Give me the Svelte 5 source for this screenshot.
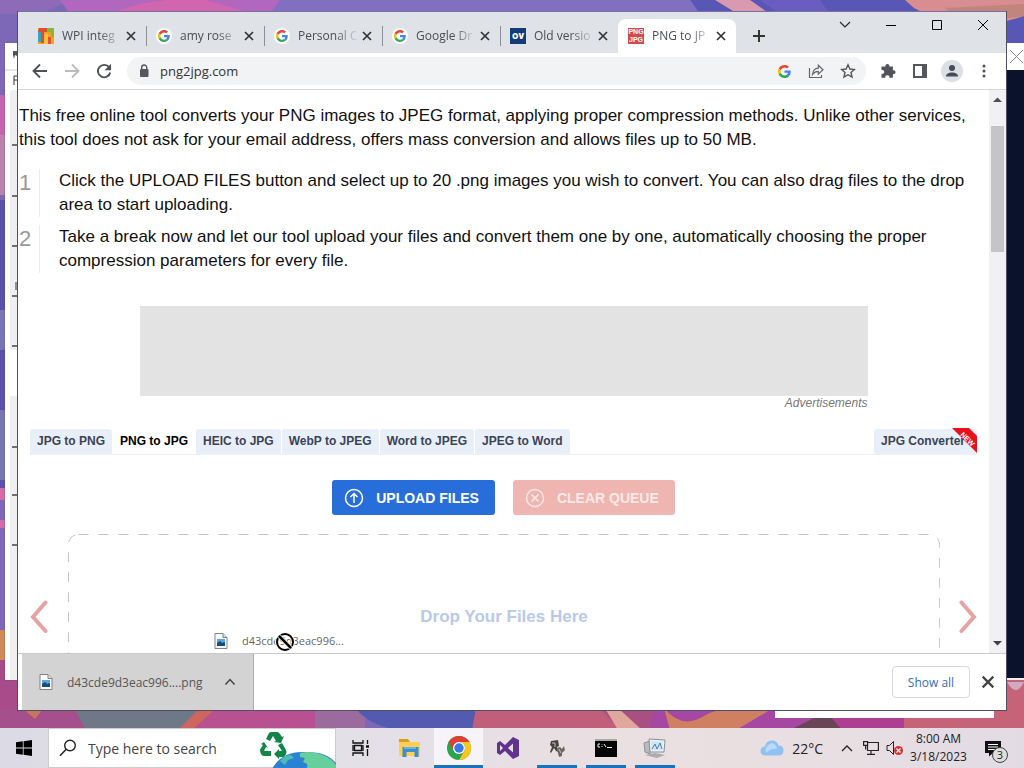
<script>
  const tabs = [
    { title: 'WPI integ', icon: 'wpi' },
    { title: 'amy rose', icon: 'google' },
    { title: 'Personal C', icon: 'google' },
    { title: 'Google Dr', icon: 'google' },
    { title: 'Old versio', icon: 'ov' },
    { title: 'PNG to JP', icon: 'png', active: true }
  ];
  const formats = ['JPG to PNG', 'PNG to JPG', 'HEIC to JPG', 'WebP to JPEG', 'Word to JPEG', 'JPEG to Word'];
  const ticks = [144, 195, 245, 295, 345, 446, 494, 544];
</script>

{#snippet google(size)}
  <svg width={size} height={size} viewBox="0 0 48 48" aria-hidden="true">
    <path fill="#ea4335" d="M24 9.5c3.5 0 6.700 1.200 9.200 3.600l6.900-6.900C35.900 2.400 30.500 0 24 0 14.600 0 6.500 5.400 2.600 13.200l8 6.200C12.400 13.700 17.700 9.500 24 9.500z" />
    <path fill="#4285f4" d="M47 24.600c0-1.600-.2-3.100-.4-4.600H24v9h12.900c-.6 3-2.200 5.500-4.800 7.200l7.700 6C44.400 38 47 31.800 47 24.600z" />
    <path fill="#fbbc05" d="M10.500 28.600a14.500 14.500 0 0 1 0-9.200l-8-6.200a24 24 0 0 0 0 21.600z" />
    <path fill="#34a853" d="M24 48c6.500 0 11.900-2.100 15.900-5.800l-7.700-6c-2.200 1.500-4.900 2.300-8.200 2.300-6.300 0-11.600-4.200-13.500-9.900l-8 6.200C6.500 42.600 14.600 48 24 48z" />
  </svg>
{/snippet}

{#snippet cross(size)}
  <svg width={size} height={size} viewBox="0 0 12 12" aria-hidden="true"><path d="M2 2l8 8M10 2l-8 8" fill="none" stroke="currentColor" stroke-width="1.7" /></svg>
{/snippet}

{#snippet file()}
  <svg width="14" height="18" viewBox="0 0 14 18" aria-hidden="true">
    <path d="M1 1.500h8l4 4v11H1z" fill="#fafafa" stroke="#7e8489" />
    <path d="M9 1.500v4h4" fill="#ddd" stroke="#7e8489" />
    <rect x="3" y="7" width="8" height="7" fill="#5aa5dc" />
    <path d="M3 14v-3l3-2 2 2 2-1 1 1v3z" fill="#174b7d" />
  </svg>
{/snippet}

<div class="desktop">
  <svg class="wallpaper" viewBox="0 0 1024 768" preserveAspectRatio="none" aria-hidden="true">
    <rect width="1024" height="768" fill="#7d68b8" />
    <path d="M0 0h70l-30 14H0z" fill="#8d6bb9" />
    <path d="M60 0h230l-12 14H70z" fill="#b067bd" />
    <path d="M110 14Q150-4 205 0l50 14z" fill="#d265b0" />
    <path d="M280 0h420l20 14H270z" fill="#8170c0" />
    <path d="M690 0h334v130H990L930 14H700z" fill="#5857b5" />
    <path d="M715 0h35l20 14h-32z" fill="#d99ab0" />
    <path d="M760 0h60l10 14h-50z" fill="#6a5cc0" />
    <path d="M905 0h119v16q-60 20-110-8z" fill="#d88d91" />
    <path d="M945 8l79-4v12l-60 8z" fill="#c2857d" />
    <path d="M0 95h6v40H0z" fill="#c764ae" /><path d="M0 135h6v60H0z" fill="#b983ac" />
    <path d="M0 200h6v290H0z" fill="#5b51aa" /><path d="M0 310h6v40H0zM0 410h6v70H0z" fill="#7776b4" />
    <path d="M0 488h6v12H0zM0 520h6v8H0z" fill="#d46aa6" />
    <path d="M0 630h6v30H0z" fill="#d18a56" />
    <path d="M0 660h20v70H0z" fill="#a94b8b" />
    <path d="M0 708h100v22H0z" fill="#a54f8d" /><path d="M22 708l22 0-9 11z" fill="#c8755d" />
    <path d="M74 708h140l-24 22H86z" fill="#6e7886" />
    <path d="M180 730q18-24 55-22h95v22z" fill="#b95091" />
    <path d="M178 730l20-20 16 0-22 20z" fill="#cf665e" />
    <path d="M315 708h50v22h-50z" fill="#9c6b9e" />
    <path d="M355 708h125v22h-82q-28-4-43-22z" fill="#525bb0" />
    <path d="M476 708h160v22H472z" fill="#c05e7b" />
    <path d="M600 708h60v22h-40z" fill="#a95080" />
    <path d="M618 730l-12-20 12-2 24 22z" fill="#e0a79c" />
    <path d="M655 708h370v22H648z" fill="#a747a4" />
    <path d="M664 708q18 22 40 8 15-9 38-8 24 1 38-4l-44 26h-66z" fill="#d08060" />
    <path d="M790 730l28-14h78v14z" fill="#694456" />
    <path d="M830 716h194v14H842z" fill="#ad3e91" />
    <path d="M904 716l104-36 16 0v50H904z" fill="#c66379" />
    <path d="M1007 682q9 16 17 0z" fill="#d4a9c0" />
  </svg>

  <div class="workspace">
    <section class="back-window" aria-hidden="true">
      <svg width="12" height="637" viewBox="0 0 12 637">
        <rect x="5" y="47" width="7" height="260" fill="#eeeef1" />
        <rect x="5" y="353" width="7" height="284" fill="#efeff0" />
        <path d="M0 27h12" stroke="#cfcfd6" /><path d="M8 8h4v5l-2-1-1 4-1-4z" fill="#555" />
        {#each ticks as y}<path d="M7 {y - 42}h5" stroke="#444" stroke-width="1.500" />{/each}
        <path d="M9 42v-9h3M9 37h3M11 247v-8" stroke="#333" fill="none" />
      </svg>
    </section>
    <section class="side-window" aria-hidden="true">
      <div class="side-title">
        <svg width="15" height="15" viewBox="0 0 15 15"><path d="M1 1l13 13M14 1L1 14" stroke="#888" fill="none" /></svg>
      </div>
    </section>
    <div class="lower-window"></div>

    <main class="browser">
      <header class="tabstrip">
        {#each tabs as tab}
          <div class="tab" class:active={tab.active}>
            <span class="favicon">
              {#if tab.icon === 'google'}
                <span class="disc">{@render google(12)}</span>
              {:else if tab.icon === 'wpi'}
                <svg width="16" height="16" viewBox="0 0 16 16" aria-hidden="true">
                  <path d="M0 0h16v16H0z" fill="#f0a12c" /><path d="M0 2h5v12H0z" fill="#35a4c6" /><path d="M1 0h8v4H6v11H3V4H0z" fill="#dd4f31" /><path d="M9 0h7v9h-3V4H9z" fill="#84b83a" /><path d="M7 6h3v10H6z" fill="#f4c637" /><path d="M10 9h3v7h-3z" fill="#dd572e" />
                </svg>
              {:else if tab.icon === 'ov'}
                <span class="ov">OV</span>
              {:else}
                <span class="png"><span>PNG</span><span>JPG</span></span>
              {/if}
            </span>
            <span class="tab-title">{tab.title}</span>
            <button class="tab-close" aria-label="Close tab">{@render cross(12)}</button>
          </div>
        {/each}
        <button class="new-tab" aria-label="New tab"><svg width="14" height="14" viewBox="0 0 14 14"><path d="M7 1v12M1 7h12" stroke="#333" stroke-width="2" /></svg></button>
        <div class="controls">
          <button aria-label="Search tabs"><svg width="12" height="12" viewBox="0 0 12 12"><path d="M1 3l5 5 5-5" fill="none" stroke="#222" stroke-width="1.100" /></svg></button>
          <button aria-label="Minimize"><svg width="12" height="12" viewBox="0 0 12 12"><path d="M1 6.500h10" stroke="#000" /></svg></button>
          <button aria-label="Maximize"><svg width="12" height="12" viewBox="0 0 12 12"><path d="M1.500 1.500h9v9h-9z" fill="none" stroke="#000" /></svg></button>
          <button aria-label="Close"><svg width="12" height="12" viewBox="0 0 12 12"><path d="M1 1l10 10M11 1L1 11" stroke="#000" /></svg></button>
        </div>
      </header>

      <nav class="toolbar">
        <button aria-label="Back"><svg width="16" height="16" viewBox="0 0 16 16"><path d="M15 8H2M8 1.500L1.500 8 8 14.500" fill="none" stroke="#4d5054" stroke-width="1.800" /></svg></button>
        <button aria-label="Forward"><svg width="16" height="16" viewBox="0 0 16 16"><path d="M1 8h13M8 1.500L14.500 8 8 14.500" fill="none" stroke="#babcbe" stroke-width="1.800" /></svg></button>
        <button aria-label="Reload"><svg width="16" height="16" viewBox="0 0 16 16"><path d="M13.200 4.500A6.200 6.200 0 1 0 14.200 9.500" fill="none" stroke="#4d5054" stroke-width="1.900" /><path d="M15 .8v6.400H8.600z" fill="#4d5054" /></svg></button>
        <div class="omnibox">
          <svg width="16" height="16" viewBox="0 0 16 16" aria-hidden="true"><rect x="4" y="6" width="8.500" height="8" rx="1" fill="#54575b" /><path d="M5.700 7V4.500a2.500 2.500 0 0 1 5 0V7" fill="none" stroke="#54575b" stroke-width="1.400" /></svg>
          <input aria-label="Address" value="png2jpg.com" />
          <button aria-label="Search with Google">{@render google(13)}</button>
          <button aria-label="Share"><svg width="16" height="16" viewBox="0 0 16 16" fill="none" stroke="#63666a" stroke-width="1.200"><path d="M1.500 5v9.500h12V12" /><path d="M4.500 11.500C4.800 7.500 7 5.400 10.300 5.200V2.200L15 6.700l-4.700 4.500V8.300C7.800 8.300 6 9.300 4.500 11.500z" /></svg></button>
          <button aria-label="Bookmark"><svg width="16" height="16" viewBox="0 0 16 16"><path d="M8 1.800l1.900 4.200 4.500.5-3.400 3 1 4.500L8 11.700 4 14l1-4.500-3.400-3L6.100 6z" fill="none" stroke="#54575b" stroke-width="1.400" /></svg></button>
        </div>
        <button aria-label="Extensions"><svg width="16" height="16" viewBox="0 0 16 16"><path d="M1.500 3.500h4a2 2 0 1 1 3.800 0h3.600v3.800a2 2 0 1 1 0 3.800v3.600H9.300a2 2 0 1 0-3.900 0H1.500v-3.900a2 2 0 1 0 0-3.700z" fill="#515458" /></svg></button>
        <button aria-label="Side panel"><svg width="16" height="16" viewBox="0 0 16 16"><path d="M2 2h12v12H2z" fill="none" stroke="#54575b" stroke-width="2" /><path d="M10 2h4v12h-4z" fill="#54575b" /></svg></button>
        <button aria-label="Profile"><span class="avatar"><svg width="14" height="14" viewBox="0 0 14 14"><circle cx="7" cy="4" r="3" fill="#464c57" /><path d="M1 12.500c0-3 3-4 6-4s6 1 6 4z" fill="#464c57" /></svg></span></button>
        <button aria-label="Menu"><svg width="4" height="14" viewBox="0 0 4 14" fill="#4d5054"><circle cx="2" cy="2" r="1.500" /><circle cx="2" cy="7" r="1.500" /><circle cx="2" cy="12" r="1.500" /></svg></button>
      </nav>

      <div class="viewport">
        <article class="page">
          <p>This free online tool converts your PNG images to JPEG format, applying proper compression methods. Unlike other services,<br />this tool does not ask for your email address, offers mass conversion and allows files up to 50 MB.</p>
          <ol>
            <li><span class="num">1</span><span class="step">Click the UPLOAD FILES button and select up to 20 .png images you wish to convert. You can also drag files to the drop<br />area to start uploading.</span></li>
            <li><span class="num">2</span><span class="step">Take a break now and let our tool upload your files and convert them one by one, automatically choosing the proper<br />compression parameters for every file.</span></li>
          </ol>
          <div class="ad"><div class="ad-box"></div><small>Advertisements</small></div>
          <nav class="formats">
            {#each formats as format, i}
              <a href="#top" class:current={i === 1}>{format}</a>
            {/each}
            <a href="#top" class="converter">JPG Converter
              <svg class="ribbon" width="26" height="26" viewBox="0 0 26 26" aria-hidden="true"><path d="M1 0h17l8 8v17z" fill="#e8101a" /><text x="0" y="0" transform="translate(9 7) rotate(45)">NEW</text></svg>
            </a>
          </nav>
          <div class="actions">
            <button class="upload"><svg width="20" height="20" viewBox="0 0 20 20"><circle cx="10" cy="10" r="8.500" /><path d="M10 15V5.500M6.500 9L10 5.500 13.500 9" /></svg>UPLOAD FILES</button>
            <button class="clear"><svg width="20" height="20" viewBox="0 0 20 20"><circle cx="10" cy="10" r="8.500" /><path d="M6.500 6.500l7 7M13.500 6.500l-7 7" /></svg>CLEAR QUEUE</button>
          </div>
          <div class="queue">
            <button aria-label="Previous"><svg width="18" height="34" viewBox="0 0 18 34"><path d="M15.500 2.500L3 17l12.500 14" /></svg></button>
            <div class="dropzone">
              <svg class="dashes" width="100%" height="100%" aria-hidden="true"><rect x="0.500" y="0.500" width="99.900%" height="99%" rx="10" /></svg>
              Drop Your Files Here
            </div>
            <button aria-label="Next"><svg width="18" height="34" viewBox="0 0 18 34"><path d="M2.500 2.500L15 17 2.500 31" /></svg></button>
          </div>
        </article>
        <div class="scrollbar" aria-hidden="true">
          <svg width="9" height="5" viewBox="0 0 9 5"><path d="M0 5l4.500-4.500L9 5z" fill="#505050" /></svg>
          <div class="track"><div class="thumb"></div></div>
          <svg width="9" height="5" viewBox="0 0 9 5"><path d="M0 0l4.500 4.500L9 0z" fill="#404040" /></svg>
        </div>
        <div class="ghost">
          {@render file()}<span>d43cde9d3eac996...</span>
          <svg class="cursor" width="20" height="20" viewBox="0 0 20 20" aria-hidden="true"><circle cx="10" cy="10" r="8" fill="none" stroke="#fff" stroke-width="4" /><circle cx="10" cy="10" r="8" fill="none" stroke="#000" stroke-width="2" /><path d="M4 4l12 12" stroke="#fff" stroke-width="4" /><path d="M4 4l12 12" stroke="#000" stroke-width="2.500" /></svg>
        </div>
      </div>

      <footer class="downloads">
        <button class="download">{@render file()}<span>d43cde9d3eac996....png</span><svg width="12" height="12" viewBox="0 0 12 12"><path d="M1.500 8.500L6 3.500l4.500 5" fill="none" stroke="#444" stroke-width="1.500" /></svg></button>
        <button class="show-all">Show all</button>
        <button class="dismiss" aria-label="Close downloads">{@render cross(16)}</button>
      </footer>
    </main>
  </div>

  <footer class="taskbar">
    <button class="start" aria-label="Start"><svg width="16" height="16" viewBox="0 0 16 16"><path d="M0 2.300l6.800-1v6.300H0zM7.600 1.200L16 0v7.600H7.600zM0 8.400h6.800v6.300l-6.800-1zM7.600 8.400H16V16l-8.400-1.200z" /></svg></button>
    <label class="search">
      <svg width="18" height="18" viewBox="0 0 18 18" aria-hidden="true"><circle cx="11" cy="6.500" r="5.300" fill="none" stroke="#222" stroke-width="1.400" /><path d="M7.200 10.300L1 16.800" stroke="#222" stroke-width="1.500" /></svg>
      <input aria-label="Search" placeholder="Type here to search" />
      <svg class="earth" width="78" height="40" viewBox="0 0 78 40" aria-hidden="true">
        <g fill="#118447" transform="translate(-2 -1)">
          <path d="M10 11l3-6q1-1 3-1h5q2 0 3 2l2 3 2-1-3 7-7-1 2-1-3-5-3 5z" />
          <path d="M26 15l4 7q1 2 0 4l-2 3h-5v2l-5-5 5-5v2h3l-4-6z" />
          <path d="M8 14l4 6-2-1-2 4h7v5H8q-2 0-3-2l-1-3q0-2 1-3l2-3-2-1z" />
        </g>
        <path d="M14 40q10-18 32-17 22-1 32 11v6z" fill="#2c82d2" />
        <path d="M42 24q12-3 25 3 8 4 11 9v4H48q4-5-3-7l2-4-5-1z" fill="#66cf9b" />
        <path d="M22 32q5-7 11-6l3 3-6 2-3 5z" fill="#4fb9b4" />
      </svg>
    </label>
    <button class="app" aria-label="Task view"><svg width="18" height="16" viewBox="0 0 18 16" fill="none" stroke="#111" stroke-width="1.300"><path d="M1 0v3h10V0M2.500 5.500h7v5h-7zM1 16v-3h10v3M1 5v6M11 5v6M15.500 0v4M15.500 9v7" /><path d="M14 6.500h3" stroke-width="2.500" /></svg></button>
    <button class="app" aria-label="File Explorer"><svg width="22" height="20" viewBox="0 0 22 20"><path d="M0 1h9l2 3h-11z" fill="#d99b20" /><path d="M0 4h21v14H0z" fill="#ffcf55" /><path d="M3.500 9h16v10h-4v-5h-8v5h-4z" fill="#3a8fcf" /><path d="M5 9h12v2H5z" fill="#65b4e4" /></svg></button>
    <button class="app focused" aria-label="Chrome"><svg width="24" height="24" viewBox="0 0 24 24"><circle cx="12" cy="12" r="12" fill="#2da44e" /><path d="M1.600 6A12 12 0 0 1 22.400 6H12a6 6 0 0 0-5.200 9z" fill="#df3f32" /><path d="M22.400 6A12 12 0 0 1 12 24l5.200-9A6 6 0 0 0 12 6z" fill="#fbc51c" /><circle cx="12" cy="12" r="6" fill="#fff" /><circle cx="12" cy="12" r="4.700" fill="#3b78e7" /></svg></button>
    <button class="app" aria-label="Visual Studio"><svg width="22" height="22" viewBox="0 0 22 22"><path fill-rule="evenodd" d="M16 0l6 3v16l-6 3-8-8-5 4-3-2V6l3-2 5 4zM16 6.500L11 11l5 4.500zM3 8v6l3-3z" fill="#62338c" /></svg></button>
    <button class="app open" aria-label="Process tool"><svg width="16" height="18" viewBox="0 0 16 18"><path d="M2 2l7-1 1 6-2 1 1 5-2-1-2-3-3 5-1-1 2-5-2-2z" fill="#45423f" /><path d="M8 9l3-1 2 2 2-3 1 4-3 3v3l-3 1-1-4z" fill="#6a6763" /><path d="M6 4v4M3 4h3M10 10l2 4" stroke="#c5c2bf" fill="none" /></svg></button>
    <button class="app open" aria-label="Command prompt"><svg width="22" height="18" viewBox="0 0 22 18"><path d="M0 0h22v18H0z" fill="#050505" /><path d="M0 1h22" stroke="#aaa" stroke-width="2" /><path d="M5 5H3v3h2M7 5v.5M7 7v1M9 5l2 3M12 8.500h5" stroke="#eee" fill="none" /></svg></button>
    <button class="app open" aria-label="Resource monitor"><svg width="24" height="20" viewBox="0 0 24 20"><path d="M1 5l6-2v13l-5-2z" fill="#b7bbc0" stroke="#8d9196" /><path d="M6 1l16 1-1 12H7z" fill="#eef3f7" stroke="#8a9095" /><path d="M8 3l12 .7-.7 8.500H8.500z" fill="#cfe5f2" /><path d="M9 11l3-5 2 5 3-6 2 6" fill="none" stroke="#4587a8" /><path d="M2 17l10-2 10 2-8 3z" fill="#a9adb0" /></svg></button>
    <div class="tray">
      <button class="weather"><svg width="24" height="16" viewBox="0 0 24 16"><path d="M5 15.500a4.500 4.500 0 0 1 0-9q1-6 7-6 5 0 6.500 5 5 0 5 5t-5 5z" fill="#8fc1f3" /><path d="M6 13q-2-6 5-10 5 0 6 6-6-1-11 4z" fill="#b9dafa" /></svg>22°C</button>
      <button aria-label="Hidden icons"><svg width="12" height="8" viewBox="0 0 12 8"><path d="M1 7l5-5 5 5" fill="none" stroke="#222" stroke-width="1.300" /></svg></button>
      <button aria-label="Network"><svg width="16" height="14" viewBox="0 0 16 14" fill="none" stroke="#222" stroke-width="1.200"><path d="M5 1.500h10.400v8H4.500V5M8 10v3M4 13.300h8M.6.600h4v3.800h-4zM2.600 4.500v4" /></svg></button>
      <button aria-label="Volume"><svg width="18" height="16" viewBox="0 0 18 16"><path d="M1 5.500h2.500l4-4v13l-4-4H1z" fill="none" stroke="#222" /><circle cx="12.500" cy="10.500" r="4.500" fill="#d13438" /><path d="M10.500 8.500l4 4M14.500 8.500l-4 4" stroke="#fff" stroke-width="1.200" /></svg></button>
      <button class="clock"><span>8:00 AM</span><span>3/18/2023</span></button>
      <button class="notes" aria-label="Notifications"><svg width="18" height="17" viewBox="0 0 18 17"><path d="M1 1h16v12H9l-4 3.500V13H1z" fill="#111" /><path d="M4 4.500h10M4 7h10M4 9.500h7" stroke="#fff" /></svg><span>3</span></button>
    </div>
  </footer>
</div>

<style>
  :global(body) { margin: 0; overflow: hidden; }
  button, input { font: inherit; color: inherit; border: 0; padding: 0; background: none; outline: 0; }
  button { display: flex; align-items: center; justify-content: center; }
  svg { display: block; flex: none; }
  .desktop { position: relative; height: 100vh; display: flex; flex-direction: column; font-family: "Open Sans", "Noto Sans", sans-serif; font-size: 12px; color: #333; }
  .wallpaper { position: absolute; inset: 0; width: 100%; height: 100%; }
  .workspace { position: relative; flex: 1; min-height: 0; }

  .back-window { position: absolute; left: 5px; top: 43px; bottom: 48px; width: 400px; background: #fff; overflow: hidden; box-shadow: 0 0 1px #444; }
  .side-window { position: absolute; right: 0; top: 43px; bottom: 48px; width: 400px; background: #0b132c; border-bottom: 2px solid #eee; }
  .side-title { height: 27px; background: #fff; display: flex; align-items: center; justify-content: flex-end; }
  .lower-window { position: absolute; right: 30px; bottom: 10px; width: 219px; height: 40px; background: #fff; }

  .browser { position: absolute; inset: 11px 17px 17px; border: 1px solid #514d63; border-top-width: 0; background: #fff; display: flex; flex-direction: column; }
  .tabstrip { height: 42px; box-sizing: border-box; border-top: 1px solid #77719f; background: #dfe2e7; display: flex; align-items: flex-end; padding-left: 10px; }
  .tab { position: relative; width: 118px; height: 34px; box-sizing: border-box; display: flex; align-items: center; padding: 0 8px 0 10px; }
  .tab::after { content: ""; position: absolute; right: -1px; top: 7px; height: 20px; width: 1px; background: #8c8f94; }
  .tab:nth-child(5)::after, .active::after { display: none; }
  .active { background: #fff; border-radius: 8px 8px 0 0; }
  .favicon { width: 16px; height: 16px; margin-right: 8px; flex: none; }
  .disc { width: 16px; height: 16px; border-radius: 50%; background: #fff; display: flex; align-items: center; justify-content: center; }
  .ov, .png { width: 16px; height: 16px; display: flex; align-items: center; justify-content: center; background: #123d78; color: #fff; font-weight: 800; font-size: 8px; line-height: 16px; }
  .png { flex-direction: column; background: #d24a4b; font-size: 7px; line-height: 8px; font-family: "Liberation Sans", sans-serif; font-weight: 700; }
  .tab-title { flex: 1; min-width: 0; overflow: hidden; white-space: nowrap; line-height: 18px; color: #4a4d51; -webkit-mask-image: linear-gradient(90deg, #000 60%, transparent 98%); mask-image: linear-gradient(90deg, #000 60%, transparent 98%); }
  .tab-close { width: 14px; height: 16px; color: #333; }
  .new-tab { width: 28px; height: 34px; margin-left: 9px; }
  .controls { margin-left: auto; align-self: flex-start; display: flex; }
  .controls button { width: 46px; height: 26px; }

  .toolbar { height: 36px; display: flex; align-items: center; padding: 0 6px; border-bottom: 1px solid #d5d6d8; }
  .toolbar button { width: 32px; height: 28px; flex: none; }
  .omnibox { flex: 1; min-width: 0; height: 28px; margin: 0 6px 0 7px; padding: 0 2px 0 9px; border-radius: 14px; background: #f1f3f4; display: flex; align-items: center; gap: 0; }
  .omnibox input { flex: 1; min-width: 0; margin-left: 8px; font-size: 13px; color: #333; }
  .avatar { width: 22px; height: 22px; border-radius: 50%; background: #dcdfe6; display: flex; align-items: center; justify-content: center; }

  .viewport { position: relative; flex: 1; min-height: 0; display: flex; overflow: hidden; }
  .page { flex: 1; min-width: 0; overflow: hidden; font-family: "Liberation Sans", Arial, sans-serif; font-size: 17px; line-height: 24px; color: #111; }
  p { margin: 14px 0 17px; padding-left: 1px; white-space: nowrap; }
  ol { list-style: none; margin: 0; padding: 0; display: grid; gap: 8px; }
  li { display: flex; white-space: nowrap; }
  .num { width: 20px; padding-left: 1px; font-size: 22px; line-height: 28px; color: #999; border-right: 1px solid #ececec; }
  .step { padding-left: 19px; }
  .ad { width: 728px; max-width: 100%; margin: 33px auto 0; display: flex; flex-direction: column; }
  .ad-box { height: 90px; background: #e3e3e3; }
  small { align-self: flex-end; font-size: 12px; line-height: 14px; font-style: italic; color: #777; }
  .formats { display: flex; gap: 1px; margin: 19px 12px 0; border-bottom: 1px solid #eceff2; }
  .formats a { padding: 0 7px; height: 25px; line-height: 25px; font-size: 12px; font-weight: 700; color: #3b4354; text-decoration: none; background: #e9eff9; border-radius: 3px 3px 0 0; white-space: nowrap; }
  .formats .current { background: #fff; color: #000; }
  .formats .converter { position: relative; margin-left: auto; padding-right: 12px; }
  .ribbon { position: absolute; right: 0; top: -1px; }
  .ribbon text { font-size: 7px; font-weight: 700; fill: #fff; }
  .actions { display: flex; justify-content: center; gap: 18px; margin-top: 25px; }
  .actions button { height: 35px; padding: 0 16px 0 12px; gap: 12px; border-radius: 3px; color: #fff; font-size: 14px; font-weight: 700; }
  .actions svg { fill: none; stroke: currentColor; stroke-width: 1.5; }
  .actions .upload { background: #286edb; }
  .actions .clear { background: #efb5b0; color: #fbe9e7; }
  .queue { display: flex; align-items: center; margin-top: 19px; }
  .queue button { width: 42px; margin-right: 8px; }
  .queue button:last-child { margin: 0 0 0 7px; }
  .queue button svg { fill: none; stroke: #e6a3a4; stroke-width: 4; stroke-linecap: round; }
  .dropzone { position: relative; flex: 1; height: 166px; display: flex; align-items: center; justify-content: center; font-weight: 700; color: #b9c9e8; }
  .dashes { position: absolute; inset: 0; }
  .dashes rect { fill: none; stroke: #c3c3c6; stroke-dasharray: 10 10; }
  .scrollbar { width: 17px; background: #f1f1f3; display: flex; flex-direction: column; align-items: center; padding: 7px 0; box-sizing: border-box; }
  .track { flex: 1; padding-top: 24px; }
  .thumb { width: 13px; height: 126px; background: #c5c5c8; }
  .ghost { position: absolute; left: 196px; bottom: 3px; display: flex; align-items: center; gap: 14px; font-size: 11px; line-height: 18px; color: #666; }
  .cursor { position: absolute; left: 61px; top: 0; }

  .downloads { height: 56px; border-top: 1px solid #c8c8c8; display: flex; align-items: center; padding: 0 8px 0 4px; }
  .download { height: 56px; padding: 0 17px; background: #d3d3d3; border-right: 1px solid #aaa; font-size: 12px; color: #555; }
  .download span { margin: 0 21px 0 14px; }
  .show-all { margin-left: auto; width: 78px; height: 32px; box-sizing: border-box; border: 1px solid #d5d8dc; border-radius: 4px; color: #356db0; font-weight: 500; }
  .dismiss { width: 20px; margin-left: 8px; height: 32px; color: #444; }

  .taskbar { position: relative; height: 40px; flex: none; display: flex; background: linear-gradient(90deg, #dcdbe5, #e4e0e6 40%, #eadfe1 60%, #e9dfe2 80%, #e2dbe4); }
  .start { width: 48px; }
  .search { position: relative; width: 288px; background: #fff; display: flex; align-items: center; padding-left: 10px; box-sizing: border-box; border: 1px solid #ccc; }
  .search input { flex: 1; min-width: 0; margin-left: 11px; font-size: 14px; }
  .search input::placeholder { color: #444; opacity: 1; }
  .earth { position: absolute; right: -1px; top: 0; }
  .app { position: relative; width: 49px; }
  .focused { background: #f6f4f8; }
  .open::after, .focused::after { content: ""; position: absolute; left: 5px; right: 4px; bottom: 0; height: 3px; background: #1872bd; }
  .focused::after { left: 0; right: 0; }
  .tray { margin-left: auto; display: flex; align-items: center; padding-right: 8px; color: #222; }
  .tray button { width: 24px; height: 40px; }
  .tray .weather { width: auto; gap: 8px; margin-right: 12px; font-size: 14px; white-space: nowrap; }
  .tray .clock { width: 63px; flex-direction: column; line-height: 18px; font-size: 12px; }
  .tray .notes { position: relative; width: 46px; }
  .notes span { position: absolute; right: 8px; bottom: 5px; width: 14px; height: 14px; border: 1px solid #444; border-radius: 50%; background: #ddd; font-size: 11px; line-height: 14px; text-align: center; }
</style>
